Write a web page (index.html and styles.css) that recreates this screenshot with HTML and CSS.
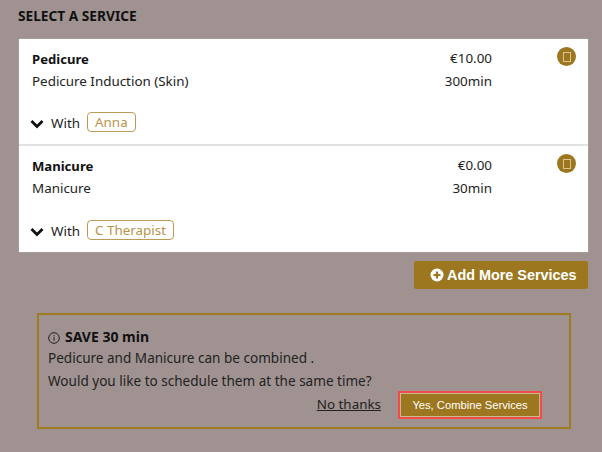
FILE: index.html
```html
<!DOCTYPE html>
<html lang="en">
<head>
<meta charset="utf-8">
<title>Select a service</title>
<link rel="stylesheet" href="styles.css">
</head>
<body>
<main class="page">
  <h1 class="title">SELECT A SERVICE</h1>
  <section class="card">
    <article class="service">
      <div class="service-top">
        <div class="names">
          <div class="name">Pedicure</div>
          <div class="line">Pedicure Induction (Skin)</div>
        </div>
        <div class="meta">
          <div class="line">€10.00</div>
          <div class="line">300min</div>
        </div>
        <div class="remove"><span class="glyph"></span></div>
      </div>
      <div class="with">
        <svg class="chevron" viewBox="0 0 14 10"><path d="M1.5 2l5.5 5.5 5.5-5.5" fill="none" stroke="#111" stroke-width="2.8"/></svg>
        <span>With</span><span class="tag">Anna</span>
      </div>
    </article>
    <article class="service">
      <div class="service-top">
        <div class="names">
          <div class="name">Manicure</div>
          <div class="line">Manicure</div>
        </div>
        <div class="meta">
          <div class="line">€0.00</div>
          <div class="line">30min</div>
        </div>
        <div class="remove"><span class="glyph"></span></div>
      </div>
      <div class="with">
        <svg class="chevron" viewBox="0 0 14 10"><path d="M1.5 2l5.5 5.5 5.5-5.5" fill="none" stroke="#111" stroke-width="2.8"/></svg>
        <span>With</span><span class="tag">C Therapist</span>
      </div>
    </article>
  </section>
  <div class="add-row">
    <button class="add" type="button">
      <svg class="plus" viewBox="0 0 14 14"><circle cx="7" cy="7" r="6.5" fill="#fff"/><path d="M7 3.5v7M3.5 7h7" stroke="#9c7720" stroke-width="2.2"/></svg>
      Add More Services
    </button>
  </div>
  <section class="notice">
    <div class="save">
      <svg class="info" viewBox="0 0 12 12"><circle cx="6" cy="6" r="5.3" fill="none" stroke="#222" stroke-width="1"/><path d="M6 5.2v3.6M6 3.2v1.1" stroke="#222" stroke-width="1"/></svg>
      <strong>SAVE 30 min</strong>
    </div>
    <div class="line first">Pedicure and Manicure can be combined .</div>
    <div class="line">Would you like to schedule them at the same time?</div>
    <div class="actions">
      <a class="nothanks" href="#">No thanks</a>
      <button class="combine" type="button">Yes, Combine Services</button>
    </div>
  </section>
</main>
</body>
</html>
```
FILE: styles.css
```css
* { box-sizing: border-box; }
html, body { margin: 0; height: 100%; }
body {
  background: #a09291;
  color: #222;
  font-family: "Noto Sans", sans-serif;
  font-size: 13.4px;
  overflow: hidden;
}
.page { padding: 7px 14px 0 19px; }
.title {
  margin: 0 0 14px -1px;
  font-size: 13.7px;
  line-height: 18px;
  font-weight: 700;
  color: #111;
}
.card {
  background: #fff;
  box-shadow: 0 0 1px rgba(255,255,255,.6);
}
.service {
  height: 107px;
  padding: 11px 12px 0 13px;
  border-bottom: 2px solid #e2e2e2;
}
.service:last-child { height: 106px; border-bottom: 0; }
.service-top { display: flex; align-items: flex-start; height: 62px; }
.names { flex: 1; }
.name { font-weight: 700; line-height: 19px; color: #111; margin-bottom: 1px; font-size: 13.1px; }
.line { line-height: 23px; }
.meta { text-align: right; margin-top: -3px; }
.remove {
  width: 19px;
  height: 19px;
  margin: -3px 0 0 65px;
  border-radius: 50%;
  background: #9c7720;
  display: flex;
  align-items: center;
  justify-content: center;
}
.glyph {
  width: 8px;
  height: 10px;
  border: 1px solid #d9c48f;
}
.with { display: flex; align-items: center; margin-left: -2px; height: 20px; }
.with span:first-of-type { margin-top: 1px; }
.service:last-child .with { margin-top: 1px; }
.chevron { width: 14px; height: 10px; margin: 3px 7px 0 0; }
.tag {
  margin-left: 7px;
  height: 20px;
  padding: 0 7px;
  border: 1px solid #bd9a55;
  border-radius: 4px;
  color: #b9934a;
  line-height: 18px;
}
.add-row { display: flex; justify-content: flex-end; margin-top: 9px; }
.add {
  width: 174px;
  height: 28px;
  padding: 0 0 1px 16px;
  border: 0;
  border-radius: 2px;
  background: #9c7720;
  color: #fff;
  font-family: "Liberation Sans", sans-serif;
  font-size: 14.4px;
  font-weight: 700;
  display: flex;
  align-items: center;
  gap: 3px;
}
.plus { width: 14px; height: 14px; }
.notice {
  width: 534px;
  height: 116px;
  margin: 24px 0 0 18px;
  padding: 12px 10px 0 9px;
  border: 2px solid #a07a22;
  font-size: 13.55px;
}
.save { display: flex; align-items: center; gap: 5px; line-height: 19px; color: #111; font-size: 14px; }
.first { margin-top: 1px; }
.info { width: 12px; height: 12px; margin-top: 2px; }
.actions { display: flex; justify-content: flex-end; align-items: center; gap: 17px; margin-top: -2px; padding-right: 17px; }
.nothanks { color: #222; text-decoration: underline; margin-top: -3px; font-size: 13.4px; }
.combine {
  width: 144px;
  height: 28px;
  padding: 0;
  background: #9c7720;
  color: #fff;
  border: 0;
  box-shadow: inset 0 0 0 2px #f24b4b, inset 0 0 0 3px #c9b98f;
  font-family: "Liberation Sans", sans-serif;
  font-size: 11.2px;
}
```
